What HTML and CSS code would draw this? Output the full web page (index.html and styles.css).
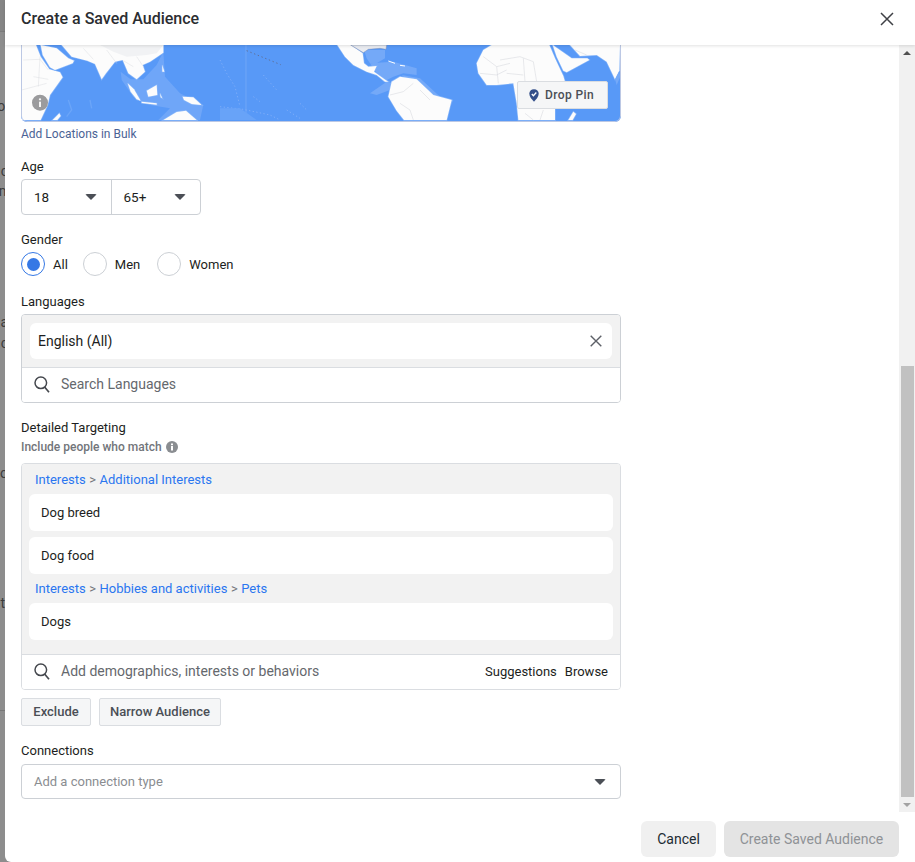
FILE: index.html
```html
<!DOCTYPE html>
<html lang="en">
<head>
<meta charset="utf-8">
<title>Create a Saved Audience</title>
<link rel="stylesheet" href="styles.css">
</head>
<body>
<div class="page">
  <div class="backdrop">
    <span class="peek peek-a">ou</span>
    <span class="peek peek-b">c</span>
    <span class="peek peek-c">m</span>
    <span class="peek peek-d">a</span>
    <span class="peek peek-e">c</span>
    <span class="peek peek-f">o</span>
    <span class="peek peek-g">t</span>
    <i class="peek-band"></i>
    <i class="peek-line"></i>
  </div>
  <div class="modal">
    <header class="modal-head">
      <h1 class="modal-title">Create a Saved Audience</h1>
      <svg class="close-icon" viewBox="0 0 14 14" width="14" height="14"><path d="M1 1l12 12M13 1L1 13" stroke="#3f4146" stroke-width="1.5" fill="none"/></svg>
    </header>
    <div class="modal-middle">
      <main class="content">
        <div class="map">
          <svg class="map-svg" viewBox="21 45 600 77" width="600" height="77" preserveAspectRatio="none">
            <rect x="21" y="45" width="600" height="77" fill="#5899f7"/>
            <g transform="translate(0 40) scale(.33333)">
              <polygon points="362,95 392,118 430,118 470,75 490,35 495,110 540,160 610,195 600,240 475,240 510,205 450,195 400,170 365,120" fill="#6fa6f8"/>
              <path d="M205 180l10 30 -15 20M270 180l5 25" stroke="#6ba5f8" stroke-width="4" fill="none"/>
              <g fill="#fcfcfc" stroke="#86b5f9" stroke-width="4" paint-order="stroke">
                <polygon points="65,15 108,15 122,50 148,88 180,97 188,112 150,165 143,195 122,240 65,240"/>
                <polygon points="122,15 170,25 205,55 222,62 218,70 165,90 150,82 128,45"/>
                <polygon points="185,15 215,50 262,62 285,72 305,118 318,100 345,65 368,60 385,100 410,118 435,95 428,75 450,65 490,38 490,15"/>
                <polygon points="158,240 178,220 182,228 172,240"/>
                <polygon points="383,130 402,148 422,182 410,178 392,155"/>
                <polygon points="440,152 470,135 472,165 445,170"/>
                <polygon points="425,185 470,190 470,194 425,189"/>
                <polygon points="480,160 487,175 482,172"/>
                <polygon points="487,75 493,95 487,95"/>
                <polygon points="548,170 580,172 605,195 575,192 552,180"/>
                <polygon points="490,240 530,216 558,212 590,240"/>
              </g>
              <polygon points="300,15 490,15 470,40 440,45 380,50 340,35" fill="#f1f2f4"/>
              <path d="M70 60L120 58L145 90M100 110L145 118M65 150L140 130M100 200L135 210M120 50L115 140M320 30L350 70M250 25L280 58M410 50L430 80M370 62L400 80" stroke="#dcdee2" stroke-width="1.5" fill="none"/>
              <circle cx="120" cy="188" r="24" fill="#9b9b9d"/>
              <rect x="117" y="185" width="6" height="16" fill="#f4f4f4"/>
              <circle cx="120" cy="178" r="3.5" fill="#f4f4f4"/>
            </g>
            <g transform="translate(220 40) scale(.33333)">
              <path d="M78 15V240" stroke="#7dadf8" stroke-width="2"/>
              <path d="M0 60L20 100L45 140L60 200M130 105L170 150M100 170L120 185M240 190L260 210M0 200L70 208L150 225L180 240M200 210L240 235" stroke="#7dadf8" stroke-width="3" fill="none" stroke-dasharray="4 7"/>
              <polygon points="0,205 60,205 110,240 0,240" fill="#68a3f8"/>
              <path d="M80 32L182 74" stroke="#5f6f96" stroke-width="3" stroke-dasharray="4 8"/>
              <polygon points="432,30 495,30 495,55 470,70 450,70 440,55" fill="#74a9f8"/>
              <polygon points="450,70 520,65 590,85 590,105 550,100 520,110 490,125 470,100" fill="#74a9f8"/>
              <polygon points="450,160 500,125 515,130 510,150 470,165" fill="#74a9f8"/>
              <polygon points="545,105 600,115 660,170 700,180 690,200 640,180" fill="#74a9f8"/>
              <g fill="#fcfcfc" stroke="#86b5f9" stroke-width="4" paint-order="stroke">
                <polygon points="352,15 392,15 428,40 432,70 445,80 470,78 462,95 480,108 497,120 505,125 495,125 470,105 440,95 400,75 375,50"/>
                <polygon points="515,125 540,110 590,118 640,165 695,180 680,240 552,240 530,212 505,170"/>
              </g>
              <polygon points="392,15 500,15 498,28 480,25 445,28 430,38" fill="#e9ebf0" stroke="#7f90b4" stroke-width="1.5"/>
              <path d="M505 63L525 70M540 76L555 78" stroke="#fff" stroke-width="3"/>
              <path d="M510 165L550 155L580 130M540 190L570 210L580 240M600 150L630 180" stroke="#d2d5da" stroke-width="1.5" fill="none"/>
            </g>
            <g transform="translate(500 40) scale(.33333)">
              <g fill="#fcfcfc" stroke="#86b5f9" stroke-width="4" paint-order="stroke">
                <polygon points="-70,70 -50,30 -25,15 148,15 165,55 190,108 195,125 195,170 165,205 165,240 55,240 50,190 40,130 -10,135 -40,135 -65,100"/>
                <polygon points="158,15 172,25 215,55 262,55 268,60 200,97 190,92 170,50"/>
                <polygon points="210,15 240,48 290,45 320,65 345,118 358,92 360,15"/>
                <polygon points="205,240 220,215 228,222 218,240"/>
              </g>
              <polygon points="345,118 358,92 361,110 350,135" fill="#74a9f8"/>
              <path d="M-50 50L-10 80L30 70M-60 100L-10 105L20 90M-10 80L-5 130M0 60L60 50L100 65M70 55L75 125M100 65L110 125M20 100L70 105M75 220L100 240M130 210L120 240M225 30L260 45" stroke="#d2d5da" stroke-width="1.5" fill="none"/>
            </g>
          </svg>
          <button class="drop-pin" type="button">
            <svg class="pin-icon" viewBox="0 0 10 13" width="10" height="13"><path d="M5 .3C7.8 .3 9.7 2.2 9.7 4.8C9.7 7.5 7.3 10.5 5 12.7C2.7 10.5 .3 7.5 .3 4.8C.3 2.2 2.2 .3 5 .3z" fill="#334f8a"/><path d="M2.8 5l1.6 1.7L7.3 3.5" stroke="#fff" stroke-width="1.3" fill="none"/></svg>
            Drop Pin
          </button>
        </div>
        <a class="bulk-link">Add Locations in Bulk</a>

        <label class="field-label age-label">Age</label>
        <div class="age-select">
          <div class="age-part"><span>18</span><i class="caret"></i></div>
          <div class="age-part"><span>65+</span><i class="caret"></i></div>
        </div>

        <label class="field-label gender-label">Gender</label>
        <div class="radios">
          <span class="radio radio-on"></span><span class="radio-text">All</span>
          <span class="radio"></span><span class="radio-text radio-text-men">Men</span>
          <span class="radio"></span><span class="radio-text">Women</span>
        </div>

        <label class="field-label lang-label">Languages</label>
        <div class="picker">
          <div class="picker-tray lang-tray">
            <div class="chip lang-chip">
              <span>English (All)</span>
              <svg viewBox="0 0 12 12" width="12" height="12"><path d="M.7.7l10.6 10.6M11.3.7L.7 11.3" stroke="#5d6067" stroke-width="1.4" fill="none"/></svg>
            </div>
          </div>
          <div class="search-row">
            <svg class="search-icon" viewBox="0 0 16 17" width="16" height="17"><circle cx="6.8" cy="6.8" r="5.8" stroke="#45484e" stroke-width="1.5" fill="none"/><path d="M10.8 11.2l4.2 5" stroke="#45484e" stroke-width="1.7" fill="none"/></svg>
            <span class="search-text">Search Languages</span>
          </div>
        </div>

        <label class="field-label target-label">Detailed Targeting</label>
        <div class="sub-label">Include people who match
          <svg viewBox="0 0 12 12" width="12" height="12"><circle cx="6" cy="6" r="6" fill="#8a8d91"/><rect x="5" y="5" width="2" height="4.5" fill="#fff"/><rect x="5" y="2.5" width="2" height="1.7" fill="#fff"/></svg>
        </div>
        <div class="picker target-picker">
          <div class="picker-tray target-tray">
            <div class="crumbs"><span>Interests</span><b>&gt;</b><span>Additional Interests</span></div>
            <div class="chip target-chip">Dog breed</div>
            <div class="chip target-chip">Dog food</div>
            <div class="crumbs crumbs-mid"><span>Interests</span><b>&gt;</b><span>Hobbies and activities</span><b>&gt;</b><span>Pets</span></div>
            <div class="chip target-chip">Dogs</div>
          </div>
          <div class="search-row">
            <svg class="search-icon" viewBox="0 0 16 17" width="16" height="17"><circle cx="6.8" cy="6.8" r="5.8" stroke="#45484e" stroke-width="1.5" fill="none"/><path d="M10.8 11.2l4.2 5" stroke="#45484e" stroke-width="1.7" fill="none"/></svg>
            <span class="search-text">Add demographics, interests or behaviors</span>
            <span class="row-link row-link-first">Suggestions</span>
            <span class="row-link">Browse</span>
          </div>
        </div>
        <div class="target-actions">
          <button class="small-btn small-btn-exclude" type="button">Exclude</button>
          <button class="small-btn small-btn-narrow" type="button">Narrow Audience</button>
        </div>

        <label class="field-label conn-label">Connections</label>
        <div class="conn-select"><span>Add a connection type</span><i class="caret"></i></div>
      </main>
      <div class="scrollbar">
        <i class="arrow-up"></i>
        <div class="scroll-gap"></div>
        <div class="thumb"></div>
        <i class="arrow-down"></i>
      </div>
    </div>
    <footer class="modal-foot">
      <button class="foot-btn cancel-btn" type="button">Cancel</button>
      <button class="foot-btn create-btn" type="button">Create Saved Audience</button>
    </footer>
  </div>
</div>
</body>
</html>
```
FILE: styles.css
```css
* { box-sizing: border-box; }
html, body { margin: 0; height: 100%; }
body { font-family: Roboto, "Liberation Sans", Arial, sans-serif; color: #1c1e21; overflow: hidden; }
.page { display: flex; width: 915px; height: 862px; background: #8d8d8d; }
.backdrop { width: 5px; position: relative; overflow: hidden; flex: none; }
.peek { position: absolute; font-size: 14px; line-height: 16px; color: #3c3c3c; }
.peek-a { right: -8px; top: 98px; }
.peek-b { right: -3px; top: 163px; }
.peek-c { right: -6px; top: 183px; }
.peek-d { right: -3px; top: 314px; }
.peek-e { right: -3px; top: 335px; }
.peek-f { right: -3px; top: 465px; }
.peek-g { right: 0; top: 595px; }
.peek-band { position: absolute; left: 0; right: 0; top: 0; height: 32px; background: #858585; border-bottom: 1px solid #7b7b7b; }
.peek-line { position: absolute; left: 0; right: 0; top: 710px; height: 1px; background: #777; }

.modal { flex: 1; min-width: 0; background: #fff; display: flex; flex-direction: column; border-bottom-left-radius: 6px; }
.modal-head { height: 45px; flex: none; display: flex; align-items: center; justify-content: space-between; padding: 0 21px 8px 16px; box-shadow: 0 1px 3px rgba(0,0,0,.12); position: relative; z-index: 2; background: #fff; }
.modal-title { margin: 0; font-size: 16px; font-weight: 500; line-height: 20px; color: #2b2d31; }
.modal-middle { height: 767px; flex: none; display: flex; overflow: hidden; }
.content { flex: 1; min-width: 0; padding: 0 278px 0 16px; display: flex; flex-direction: column; align-items: stretch; }
.map { height: 77px; flex: none; position: relative; border-radius: 0 0 6px 6px; overflow: hidden; }
.map::after { content: ""; position: absolute; inset: -2px 0 0; border: 1px solid #bcc8e4; border-radius: 0 0 6px 6px; }
.map-svg { display: block; }
.drop-pin { position: absolute; right: 13px; top: 36px; width: 91px; height: 28px; padding: 0 0 0 11px; border: 1px solid #dadde1; border-radius: 2px; background: #f5f6f7; color: #4b4f56; font: 500 12px/26px Roboto, sans-serif; letter-spacing: .4px; display: flex; align-items: center; gap: 6px; z-index: 1; }
.pin-icon { flex: none; }
.bulk-link { font-size: 12px; line-height: 14px; margin-top: 5px; color: #4b6395; align-self: flex-start; }

.field-label { font-size: 13px; height: 16px; line-height: 18px; color: #1c1e21; display: block; }
.age-label { margin-top: 17px; }
.age-select { margin-top: 5px; width: 180px; height: 36px; display: flex; border: 1px solid #ccd0d5; border-radius: 4px; }
.age-part { flex: 1; display: flex; align-items: center; justify-content: space-between; padding: 0 14px 0 12px; font-size: 13.5px; }
.age-part + .age-part { border-left: 1px solid #ccd0d5; }
.caret { width: 0; height: 0; border-style: solid; border-width: 6px 6px 0; border-color: #4b4f56 transparent transparent; display: block; flex: none; border-radius: 2px; }

.gender-label { margin-top: 16px; }
.radios { margin-top: 5px; display: flex; align-items: center; height: 24px; font-size: 13px; }
.radio { width: 24px; height: 24px; border-radius: 50%; border: 1px solid #ccd0d5; flex: none; position: relative; }
.radio-on { border: 1.5px solid #3578e5; }
.radio-on::after { content: ""; position: absolute; inset: 4.5px; border-radius: 50%; background: #3578e5; }
.radio-text { margin: 0 15px 0 8px; color: #1c1e21; }
.radio-text-men { margin-right: 17px; }

.lang-label { margin-top: 17px; }
.picker { margin-top: 5px; border: 1px solid #ccd0d5; border-radius: 4px; overflow: hidden; }
.picker-tray { background: #f2f2f2; border-bottom: 1px solid #dadde1; }
.lang-tray { height: 53px; padding: 8px 8px 0; }
.chip { background: #fff; border-radius: 6px; font-size: 14px; color: #1c1e21; }
.lang-chip { height: 36px; display: flex; align-items: center; justify-content: space-between; padding: 0 10px 0 8px; }
.search-row { height: 34px; display: flex; align-items: center; padding: 0 12px 2px; font-size: 14px; background: #fff; }
.search-icon { flex: none; margin-right: 11px; }
.search-text { color: #65686d; flex: 1; }
.row-link { font-size: 13px; color: #1c1e21; }
.row-link-first { margin-right: 8px; }

.target-label { margin-top: 16px; }
.sub-label { margin-top: 5px; font-size: 12px; line-height: 14px; font-weight: 500; color: #72757a; display: flex; align-items: center; gap: 4px; }
.target-picker { margin-top: 9px; border-color: #dadde1; }
.target-tray { height: 191px; padding: 8px 7px 0; }
.crumbs { font-size: 13px; line-height: 16px; height: 22px; padding-left: 6px; color: #2a76f0; display: flex; gap: 3.5px; }
.crumbs b { font-weight: 400; color: #72757a; }
.crumbs-mid { height: 29px; padding-top: 7px; }
.target-chip { height: 37px; line-height: 37px; padding-left: 12px; font-size: 13px; margin-bottom: 6px; }
.target-chip:nth-child(3) { margin-bottom: 0; }
.target-actions { display: flex; gap: 8px; margin-top: 8px; }
.small-btn { height: 28px; padding: 0; border: 1px solid #dadde1; border-radius: 2px; background: #f5f6f7; color: #4b4f56; font: 500 13px/26px Roboto, sans-serif; }
.small-btn-exclude { width: 70px; }
.small-btn-narrow { width: 122px; }

.conn-label { margin-top: 16px; }
.conn-select { margin-top: 6px; height: 35px; border: 1px solid #ccd0d5; border-radius: 4px; display: flex; align-items: center; justify-content: space-between; padding: 0 14px 0 12px; font-size: 13px; color: #8a8d91; }

.scrollbar { width: 16px; flex: none; background: #f1f1f1; display: flex; flex-direction: column; align-items: center; }
.arrow-up, .arrow-down { display: block; width: 0; height: 0; flex: none; border-style: solid; }
.arrow-up { border-width: 0 4px 4px; border-color: transparent transparent #505050; margin: 6px 0 0; }
.arrow-down { border-width: 4px 4px 0; border-color: #a3a3a3 transparent transparent; margin: 6px 0 5px; }
.scroll-gap { flex: 1; }
.thumb { width: 13px; height: 431px; background: #c1c1c1; flex: none; }

.modal-foot { flex: 1; display: flex; justify-content: flex-end; align-items: flex-start; gap: 8px; padding: 9px 16px 0 0; }
.foot-btn { height: 36px; border: 0; border-radius: 6px; font: 400 14px Roboto, sans-serif; padding: 0; }
.cancel-btn { width: 75px; background: #f0f0f0; color: #1c2b33; }
.create-btn { width: 175px; background: #e4e4e4; color: #8f9296; }
```
